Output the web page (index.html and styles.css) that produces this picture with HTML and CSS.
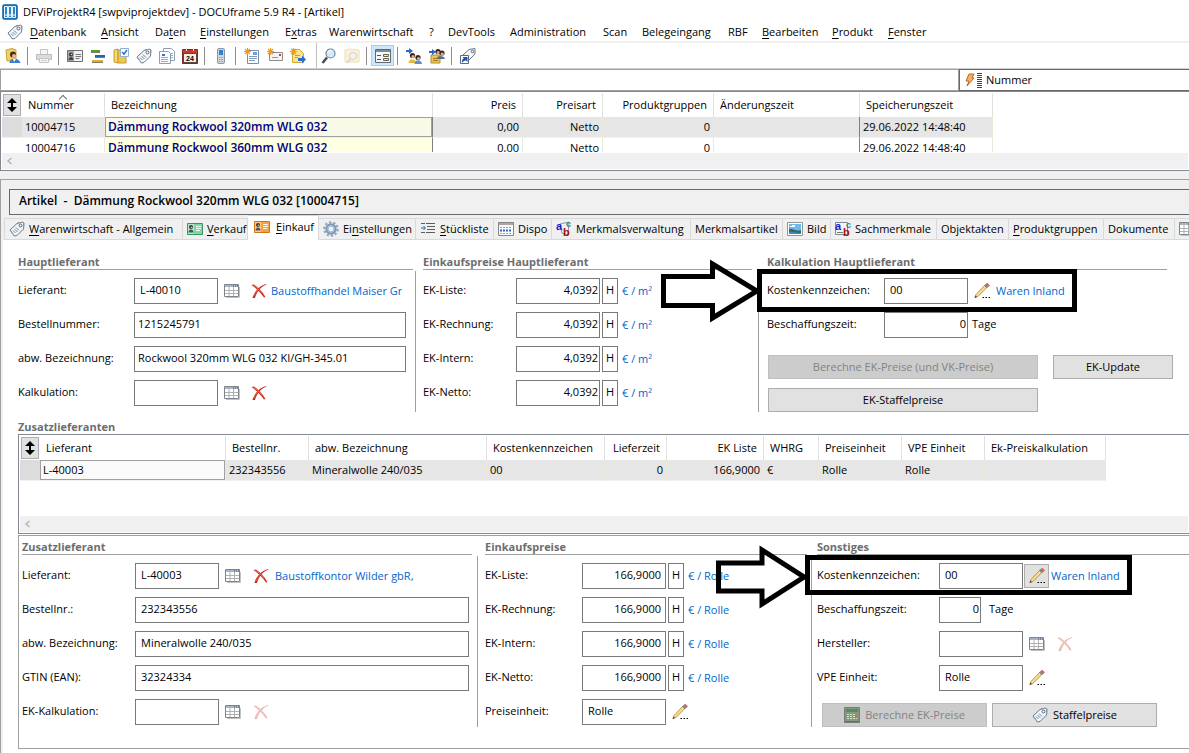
FILE: index.html
```html
<!DOCTYPE html>
<html lang="de">

<head>
  <meta charset="UTF-8">
  <meta name="viewport" content="width=device-width, initial-scale=1.0">
  <title>DFViProjektR4 [swpviprojektdev] - DOCUframe 5.9 R4 - [Artikel]</title>
  <link rel="stylesheet" href="styles.css">
</head>

<body>
  <!-- icon sprite -->
  <svg class="sprite" aria-hidden="true">
    <symbol id="i-app" viewBox="0 0 16 16">
      <rect x="0.5" y="0.5" width="15" height="15" rx="2" fill="#1c6fae" stroke="#3d87bd" />
      <path d="M2.500 2.500h3v11h-3zM6.500 2.500h3v11h-3zM10.500 2.500h3v11h-3z" fill="#2f86c5" stroke="#e8f4fc" />
      <path d="M4 10v2M8 10v2M12 10v2" stroke="#fff" />
    </symbol>
    <symbol id="i-tag" viewBox="0 0 16 16">
      <path d="M1 9 8 2.500l5.500-1.500 1.500 1.500L14.500 8 8 14.500 5.500 15z" fill="#f4f7fa" stroke="#66788a" />
      <path d="M1 9 5.500 15M9 1.500h5.500v5" fill="none" stroke="#8a99a8" />
      <path d="M4 9.500 6.500 12M5.500 8l3 3M7 6.500 10 9.500" stroke="#71869c" />
      <circle cx="11.500" cy="4.500" r="1.500" fill="#fff" stroke="#4f6478" />
    </symbol>
    <symbol id="i-login" viewBox="0 0 16 16">
      <path d="M1 2l6-1.500L11 2v10l-9 1z" fill="#f0d264" stroke="#c9a233" />
      <circle cx="8" cy="6.500" r="3" fill="#4a2a1c" />
      <circle cx="9" cy="8" r="2" fill="#e9b48c" />
      <path d="M4.500 15c0-5 9-6 11 0z" fill="#3c78d8" />
      <path d="M8 11l1 3 2-3z" fill="#fff" />
    </symbol>
    <symbol id="i-printer" viewBox="0 0 16 16">
      <path d="M4.500 1.500h7v5h-7z" fill="#f6f6f6" stroke="#c4c4c4" />
      <path d="M0.500 6.500h15v5h-15z" fill="#dcdcdc" stroke="#bdbdbd" />
      <path d="M3.500 10.500h9v4h-9z" fill="#f7f7f7" stroke="#c4c4c4" />
      <path d="M5 12.500h6" stroke="#cfcfcf" />
    </symbol>
    <symbol id="i-card" viewBox="0 0 16 16">
      <path d="M0.500 2.500h15v11h-15z" fill="#f1f1f1" stroke="#6e6e6e" />
      <path d="M1 3h6v10H1z" fill="#a9a9a9" />
      <circle cx="4" cy="6.500" r="2" fill="#333" />
      <circle cx="4.500" cy="6.500" r="0.800" fill="#ddd" />
      <path d="M1.500 12c0-4 5-4 5 0z" fill="#444" />
      <path d="M8.500 6.500H14M8.500 8.500H14M8.500 10.500h4" stroke="#777" />
    </symbol>
    <symbol id="i-card-green" viewBox="0 0 16 16">
      <path d="M0.500 2.500h15v11h-15z" fill="#86d3a6" stroke="#2f9c60" />
      <path d="M1 3h6v10H1z" fill="#b9e6cb" />
      <circle cx="4" cy="6" r="2" fill="#3a332c" />
      <circle cx="4.500" cy="6.300" r="0.900" fill="#d8b48c" />
      <path d="M1.500 11.500c0-4 5-4 5 0z" fill="#2f5d6a" />
      <path d="M9 5.500h5M9 7.500h5M9 9.500h4" stroke="#f4fff8" />
    </symbol>
    <symbol id="i-card-orange" viewBox="0 0 16 16">
      <path d="M0.500 2.500h15v11h-15z" fill="#f9a03f" stroke="#d27412" />
      <path d="M1 3h6v10H1z" fill="#ffc98a" />
      <circle cx="4" cy="6" r="2" fill="#3a332c" />
      <circle cx="4.500" cy="6.300" r="0.900" fill="#d8b48c" />
      <path d="M1.500 11.500c0-4 5-4 5 0z" fill="#4c5560" />
      <path d="M9 5.500h5M9 7.500h5M9 9.500h4" stroke="#fff6ea" />
    </symbol>
    <symbol id="i-gantt" viewBox="0 0 16 16">
      <path d="M1 2h9v2H1z" fill="#4fa51f" />
      <path d="M5 7h10v2H5z" fill="#1d67b8" />
      <path d="M2 12h11v2H2z" fill="#e7a63c" />
      <path d="M1 4.500h9M5 9.500h10M2 14.500h11" stroke="#7d7d60" />
    </symbol>
    <symbol id="i-folder-check" viewBox="0 0 16 16">
      <path d="M1 2l4-1v14l-4-1z" fill="#f5d873" stroke="#c79c2b" />
      <path d="M5 2h8v13H5z" fill="#eec553" stroke="#c79c2b" />
      <path d="M7.500 0.500h8v8h-8z" fill="#fff" stroke="#8fb3d6" />
      <path d="M9 4l2 2 3-4" fill="none" stroke="#2c73c9" stroke-width="1.500" />
    </symbol>
    <symbol id="i-docs" viewBox="0 0 16 16">
      <path d="M4.500 0.500h8l3 3v9h-11z" fill="#fff" stroke="#8c9fb8" />
      <path d="M0.500 3.500h9l2 2v10h-11z" fill="#fbfcff" stroke="#8c9fb8" />
      <path d="M2 9.500h7M2 11.500h7M2 13.500h7M12 5.500h2M12 7.500h2M12 9.500h2" stroke="#9aabc4" />
      <path d="M3 6h3v2H3z" fill="#4a6fd0" />
    </symbol>
    <symbol id="i-calendar" viewBox="0 0 16 16">
      <path d="M0.500 1.500h15v14h-15z" fill="#5a4a40" stroke="#7a2a22" />
      <path d="M1 2h14v3H1z" fill="#c93a2c" />
      <path d="M2 6h12v8H2z" fill="#f3efe8" />
      <path d="M4.500 0v3M11.500 0v3" stroke="#e8e8e8" />
      <text x="8" y="13" text-anchor="middle" class="glyph-day">24</text>
    </symbol>
    <symbol id="i-phone" viewBox="0 0 16 16">
      <rect x="4.500" y="0.500" width="7" height="15" rx="1.500" fill="#cfd5db" stroke="#8d979f" />
      <path d="M6 2h4v5H6z" fill="#2d82d6" />
      <path d="M6 9.500h4M6 11.500h4M6 13.500h4" stroke="#9aa4ac" stroke-dasharray="1 0.500" />
    </symbol>
    <symbol id="i-new-doc" viewBox="0 0 16 16">
      <path d="M3.500 2.500h11v13h-11z" fill="#fff" stroke="#7c8da3" />
      <path d="M9 4h4v3H9z" fill="#6f9ee0" />
      <path d="M5 8.500h8M5 10.500h8M5 12.500h6" stroke="#7d9cc0" />
      <path d="M3.500 0v7M0 3.500h7M1 1l5 5M6 1 1 6" stroke="#f09a1c" stroke-width="1.200" />
    </symbol>
    <symbol id="i-new-mail" viewBox="0 0 16 16">
      <path d="M2.500 4.500h13v8h-13z" fill="#f4f4f4" stroke="#8c8c8c" />
      <path d="M12 6h2v2h-2z" fill="#d23c2c" />
      <path d="M5 9.500h6" stroke="#999" />
      <path d="M3.500 0v7M0 3.500h7M1 1l5 5M6 1 1 6" stroke="#f09a1c" stroke-width="1.200" />
    </symbol>
    <symbol id="i-new-export" viewBox="0 0 16 16">
      <path d="M2.500 1.500h7l4 4v9h-11z" fill="#fbe48a" stroke="#d0a832" />
      <path d="M5 7.500h5M5 9.500h3" stroke="#c79f30" />
      <path d="M8 10h4V7.500l4 4-4 4V13H8z" fill="#2b68d8" />
      <path d="M3.500 0v7M0 3.500h7M1 1l5 5M6 1 1 6" stroke="#f09a1c" stroke-width="1.200" />
    </symbol>
    <symbol id="i-search" viewBox="0 0 16 16">
      <path d="M6 9.500 1.500 15" stroke="#4b4b50" stroke-width="2.500" />
      <circle cx="9.500" cy="5.500" r="4.500" fill="#d3e9f8" stroke="#6d8298" stroke-width="1.200" />
      <path d="M7 5c0-2 2-3 3.500-2.500" fill="none" stroke="#fff" stroke-width="1.300" />
    </symbol>
    <symbol id="i-search-folder" viewBox="0 0 16 16">
      <path d="M1 2l4-1 10 1v12H1z" fill="#faf1d6" stroke="#eddfb4" />
      <circle cx="9" cy="8" r="3.500" fill="#f3f3f3" stroke="#cfcfcf" />
      <path d="M6 11l-3 4" stroke="#d6d6d6" stroke-width="2" />
    </symbol>
    <symbol id="i-form" viewBox="0 0 16 16">
      <path d="M0.500 1.500h15v13h-15z" fill="#f7f7f5" stroke="#5d6a76" />
      <path d="M1 2h14v2H1z" fill="#7e8a96" />
      <path d="M2 7.500h4M2 11.500h4" stroke="#555" />
      <path d="M8.500 6.500h5v2h-5zM8.500 10.500h5v2h-5z" fill="#f3e7a8" stroke="#6a6250" />
    </symbol>
    <symbol id="i-people-in" viewBox="0 0 16 16">
      <path d="M0 2h3V0l4 3-4 3V4H0z" fill="#2b68c8" />
      <circle cx="6.500" cy="7.500" r="2.600" fill="#3d241a" />
      <circle cx="7" cy="8.500" r="1.600" fill="#e3ab82" />
      <path d="M2.500 15c0-5 7-5 8 0z" fill="#e9b93c" />
      <circle cx="12" cy="9.500" r="2.600" fill="#3d241a" />
      <circle cx="12.500" cy="10.500" r="1.600" fill="#e3ab82" />
      <path d="M8.500 16c0-5 7-5 7.500 0z" fill="#5a8fd0" />
    </symbol>
    <symbol id="i-people-folder" viewBox="0 0 16 16">
      <path d="M2 7h9v8H2z" fill="#ecc654" stroke="#b58c28" />
      <path d="M0 3h3V1l4 3-4 3V5H0z" fill="#2b68c8" />
      <circle cx="9" cy="3.500" r="2.600" fill="#3d241a" />
      <circle cx="9.300" cy="4.500" r="1.600" fill="#e3ab82" />
      <circle cx="13" cy="5" r="2.600" fill="#3d241a" />
      <circle cx="13.200" cy="6" r="1.600" fill="#e3ab82" />
      <path d="M7 11c1-4 8-4 9 0z" fill="#5b6f8c" />
      <path d="M4 10.500h5M4 12.500h5" stroke="#9a7720" />
    </symbol>
    <symbol id="i-tag-link" viewBox="0 0 16 16">
      <path d="M3 7 9 1.500l6-1V6L8 13z" fill="#f4f7fa" stroke="#66788a" />
      <circle cx="12.500" cy="3.500" r="1.200" fill="#fff" stroke="#4f6478" />
      <path d="M0.500 7.500h8v8h-8z" fill="#fff" stroke="#5a6b7c" />
      <path d="M2 15c0-4 1-4.500 2-4.500L2.500 9H7.500v5L6 12.500c-2 0-3 1-4 2.500z" fill="#1f55a8" />
    </symbol>
    <symbol id="i-flash" viewBox="0 0 20 16">
      <path d="M5 2h5L8 6h2l-7 8 2-5H2z" fill="#f9b064" stroke="#b56a2c" />
      <path d="M13 1.500h5M13 3.500h5M13 5.500h5M13 7.500h5M13 9.500h5M13 11.500h5M13 13.500h5M13 15.500h5" stroke="#444" />
    </symbol>
    <symbol id="i-updown" viewBox="0 0 10 14">
      <path d="M5 0l5 5H6v4h4l-5 5-5-5h4V5H0z" fill="#000" />
    </symbol>
    <symbol id="i-left" viewBox="0 0 8 8">
      <path d="M5.500 1 2 4l3.500 3" fill="none" stroke="#b5b5b5" stroke-width="1.500" />
    </symbol>
    <symbol id="i-gear" viewBox="0 0 16 16">
      <circle cx="8" cy="8" r="6.700" fill="none" stroke="#8fa9c6" stroke-width="2.200" stroke-dasharray="2.300 1.900" />
      <circle cx="8" cy="8" r="4.700" fill="#b4c9e0" stroke="#7d98b6" stroke-width="2" />
      <circle cx="8" cy="8" r="3" fill="#f0f0f0" stroke="#9db3cc" />
    </symbol>
    <symbol id="i-list" viewBox="0 0 16 16">
      <path d="M1 2.500h4M6 2.500h9M7 5.500h8M7 8.500h8M1 11.500h4M6 11.500h9" stroke="#5c5c5c" />
      <path d="M1 7h4M3.500 5l2 2-2 2" fill="none" stroke="#2466c4" />
    </symbol>
    <symbol id="i-dispo" viewBox="0 0 16 16">
      <path d="M0.500 1.500h15v13h-15z" fill="#fafafa" stroke="#868686" />
      <path d="M1 2h14v2H1z" fill="#a8a8a8" />
      <path d="M2 6.500h12M2 12.500h12" stroke="#9aa2ac" stroke-dasharray="2 1" />
      <path d="M2 9.500h12" stroke="#2f68c0" stroke-width="2" stroke-dasharray="2 1" />
    </symbol>
    <symbol id="i-abc" viewBox="0 0 16 16">
      <path d="M4 3l9-2-1 13-6-2z" fill="#eef2f6" stroke="#8b98a6" />
      <text x="0" y="9" class="glyph-a">a</text>
      <text x="7" y="15" class="glyph-b">b</text>
      <text x="10" y="6" class="glyph-c">c</text>
    </symbol>
    <symbol id="i-abc-form" viewBox="0 0 16 16">
      <path d="M0.500 1.500h12v12h-12z" fill="#f2f4f6" stroke="#7f8a96" />
      <path d="M2 11.500h6" stroke="#777" />
      <text x="0" y="9" class="glyph-a">a</text>
      <text x="8" y="15" class="glyph-b">b</text>
      <text x="11" y="7" class="glyph-c">c</text>
    </symbol>
    <symbol id="i-image" viewBox="0 0 16 16">
      <path d="M0.500 1.500h15v13h-15z" fill="#fff" stroke="#8f979e" />
      <path d="M2 3h12v7H2z" fill="#6fb7ec" />
      <path d="M3 5h5v1H3zM5 4h3v1H5z" fill="#fff" />
      <path d="M2 8c4-1 6 3 12 1v4H2z" fill="#2e6d5f" />
      <path d="M2 11c4-1 8 1 12 1v1H2z" fill="#3f86c9" />
    </symbol>
    <symbol id="i-grid" viewBox="0 0 16 16">
      <path d="M2 14.500h13.500V4" fill="none" stroke="#c2c2c2" />
      <path d="M0.500 1.500h14v12h-14z" fill="#fff" stroke="#7d858c" />
      <path d="M1 2h13v2H1z" fill="#a9b4c2" />
      <path d="M9 3h1M11 3h1M13 3h1" stroke="#3e5a86" />
      <path d="M1 7.500h13M1 10.500h13M5 4v9M9.500 4v9" stroke="#b1b1b1" />
    </symbol>
    <symbol id="i-cross" viewBox="0 0 16 16">
      <path d="M0.500 2 3 1.500C7 4 11 8 14.500 14L13 14.500C10 10 6 6 0.500 2z" fill="#d4301c" />
      <path d="M15.500 1.500C10 3.500 5.500 9 4 15L1.500 15C3 8.500 8.500 3 15 1z" fill="#c8240f" />
      <path d="M2.500 2.300C6 4.500 9 7.500 11 10M2.800 13.500C4 10 6 7.500 8 5.500" fill="none" stroke="#f0806c" stroke-width="0.700" />
    </symbol>
    <symbol id="i-pencil" viewBox="0 0 16 16">
      <path d="M1 14.500 2 11.500l8.500-9 2.200 2.200L4 13.500z" fill="#f9dc8c" stroke="#a5823f" stroke-width="0.800" />
      <path d="M0.500 15 1.500 12.500 3 14z" fill="#444" />
      <path d="M10.500 2.500l1-1 2.300 2.300-1 1z" fill="#6ba888" stroke="#4a7a62" stroke-width="0.700" />
      <path d="M12 1.200l1-1 2.500 2-1.200 1.400z" fill="#e0606e" stroke="#c24a58" stroke-width="0.700" />
      <path d="M8.500 14.500H10M11.500 14.500H13M14.500 14.500H16" stroke="#000" />
    </symbol>
    <symbol id="i-calc" viewBox="0 0 16 16">
      <path d="M0.500 0.500h15v15h-15z" fill="#7e9c7e" stroke="#7a7a7a" />
      <path d="M2 2h12v3H2z" fill="#5f8468" />
      <path d="M3 7.500h10M3 9.500h10M3 11.500h10" stroke="#cfe6c8" stroke-dasharray="2 1" />
      <path d="M11 7.500h2M11 9.500h2" stroke="#c56a52" />
      <path d="M1 14.500h14" stroke="#6a6a6a" />
    </symbol>
  </svg>

  <header class="titlebar">
    <svg class="icon"><use href="#i-app" /></svg>
    <h1>DFViProjektR4 [swpviprojektdev] - DOCUframe 5.9 R4 - [Artikel]</h1>
  </header>

  <nav class="menubar">
    <svg class="icon"><use href="#i-tag" /></svg>
    <a href="#"><u>D</u>atenbank</a>
    <a href="#"><u>A</u>nsicht</a>
    <a href="#">Da<u>t</u>en</a>
    <a href="#"><u>E</u>instellungen</a>
    <a href="#">E<u>x</u>tras</a>
    <a href="#">Warenwirtschaft</a>
    <a href="#">?</a>
    <a href="#">DevTools</a>
    <a href="#">Administration</a>
    <a href="#">Scan</a>
    <a href="#">Belegeingang</a>
    <a href="#">RBF</a>
    <a href="#"><u>B</u>earbeiten</a>
    <a href="#"><u>P</u>rodukt</a>
    <a href="#"><u>F</u>enster</a>
  </nav>

  <div class="toolbar">
    <div class="tool-group">
      <button aria-label="Anmelden"><svg class="icon"><use href="#i-login" /></svg></button>
      <span class="tool-sep"></span>
      <button aria-label="Drucken" disabled><svg class="icon"><use href="#i-printer" /></svg></button>
      <span class="tool-sep"></span>
      <button aria-label="Adressen"><svg class="icon"><use href="#i-card" /></svg></button>
      <button aria-label="Projekte"><svg class="icon"><use href="#i-gantt" /></svg></button>
      <button aria-label="Aufgaben"><svg class="icon"><use href="#i-folder-check" /></svg></button>
      <button aria-label="Artikel"><svg class="icon"><use href="#i-tag" /></svg></button>
      <button aria-label="Belege"><svg class="icon"><use href="#i-docs" /></svg></button>
      <button aria-label="Kalender"><svg class="icon"><use href="#i-calendar" /></svg></button>
      <span class="tool-sep"></span>
      <button aria-label="Telefon"><svg class="icon"><use href="#i-phone" /></svg></button>
      <span class="tool-sep"></span>
      <button aria-label="Neues Dokument"><svg class="icon"><use href="#i-new-doc" /></svg></button>
      <button aria-label="Neue E-Mail"><svg class="icon"><use href="#i-new-mail" /></svg></button>
      <button aria-label="Neuer Export"><svg class="icon"><use href="#i-new-export" /></svg></button>
    </div>
    <div class="tool-group">
      <button aria-label="Suchen"><svg class="icon"><use href="#i-search" /></svg></button>
      <button aria-label="Akte suchen" disabled><svg class="icon"><use href="#i-search-folder" /></svg></button>
      <span class="tool-sep"></span>
      <button class="pressed" aria-label="Maske"><svg class="icon"><use href="#i-form" /></svg></button>
      <span class="tool-sep"></span>
      <button aria-label="Zuweisen"><svg class="icon"><use href="#i-people-in" /></svg></button>
      <button aria-label="Gruppe zuweisen"><svg class="icon"><use href="#i-people-folder" /></svg></button>
      <span class="tool-sep"></span>
      <button aria-label="Verknüpfung"><svg class="icon"><use href="#i-tag-link" /></svg></button>
    </div>
  </div>

  <div class="searchbar">
    <input type="text" aria-label="Suche">
    <button class="search-field"><svg class="icon-wide"><use href="#i-flash" /></svg>Nummer</button>
  </div>

  <div class="list article-list">
    <div class="list-view">
      <table>
        <colgroup>
          <col class="c-handle"><col class="c-nummer"><col class="c-bez"><col class="c-preis"><col class="c-art"><col class="c-gruppen"><col class="c-aend"><col class="c-speich">
        </colgroup>
        <thead>
          <tr>
            <th class="handle"><button aria-label="Sortieren"><svg><use href="#i-updown" /></svg></button></th>
            <th class="sorted">Nummer</th>
            <th>Bezeichnung</th>
            <th class="num">Preis</th>
            <th class="num">Preisart</th>
            <th class="num">Produktgruppen</th>
            <th>Änderungszeit</th>
            <th>Speicherungszeit</th>
          </tr>
        </thead>
        <tbody>
          <tr class="selected">
            <td class="handle"></td>
            <td>10004715</td>
            <td class="name current">Dämmung Rockwool 320mm WLG 032</td>
            <td class="num">0,00</td>
            <td class="num">Netto</td>
            <td class="num">0</td>
            <td class="frozen"></td>
            <td>29.06.2022 14:48:40</td>
          </tr>
          <tr>
            <td class="handle"></td>
            <td>10004716</td>
            <td class="name">Dämmung Rockwool 360mm WLG 032</td>
            <td class="num">0,00</td>
            <td class="num">Netto</td>
            <td class="num">0</td>
            <td class="frozen"></td>
            <td>29.06.2022 14:48:40</td>
          </tr>
        </tbody>
      </table>
    </div>
    <div class="hscroll"><svg><use href="#i-left" /></svg></div>
  </div>

  <main class="detail">
    <h2 class="record-title">Artikel&nbsp; -&nbsp; Dämmung Rockwool 320mm WLG 032 [10004715]</h2>

    <div class="tabs" role="tablist">
      <button role="tab"><svg class="icon"><use href="#i-tag" /></svg><span><u>W</u>arenwirtschaft - Allgemein</span></button>
      <button role="tab"><svg class="icon"><use href="#i-card-green" /></svg><span><u>V</u>erkauf</span></button>
      <button role="tab" class="active" aria-selected="true"><svg class="icon"><use href="#i-card-orange" /></svg><span><u>E</u>inkauf</span></button>
      <button role="tab"><svg class="icon"><use href="#i-gear" /></svg><span>Ei<u>n</u>stellungen</span></button>
      <button role="tab"><svg class="icon"><use href="#i-list" /></svg><span><u>S</u>tückliste</span></button>
      <button role="tab"><svg class="icon"><use href="#i-dispo" /></svg><span>Dispo</span></button>
      <button role="tab"><svg class="icon"><use href="#i-abc" /></svg><span>Merkmalsverwaltung</span></button>
      <button role="tab"><span>Merkmalsartikel</span></button>
      <button role="tab"><svg class="icon"><use href="#i-image" /></svg><span>Bild</span></button>
      <button role="tab"><svg class="icon"><use href="#i-abc-form" /></svg><span>Sachmerkmale</span></button>
      <button role="tab"><span>Objektakten</span></button>
      <button role="tab"><span><u>P</u>roduktgruppen</span></button>
      <button role="tab"><span>Dokumente</span></button>
      <button role="tab" aria-label="Tabelle"><svg class="icon"><use href="#i-grid" /></svg></button>
    </div>

    <div class="page">
      <div class="sections main-supplier">
        <section class="col-supplier">
          <h3>Hauptlieferant</h3>
          <div class="row">
            <label for="hl-lieferant">Lieferant:</label>
            <input id="hl-lieferant" class="short" type="text" value="L-40010">
            <button class="icon-btn" aria-label="Auswählen"><svg class="icon"><use href="#i-grid" /></svg></button>
            <button class="icon-btn" aria-label="Entfernen"><svg class="icon"><use href="#i-cross" /></svg></button>
            <a href="#">Baustoffhandel Maiser Gr</a>
          </div>
          <div class="row">
            <label for="hl-bestell">Bestellnummer:</label>
            <input id="hl-bestell" type="text" value="1215245791">
          </div>
          <div class="row">
            <label for="hl-bez">abw. Bezeichnung:</label>
            <input id="hl-bez" type="text" value="Rockwool 320mm WLG 032 KI/GH-345.01">
          </div>
          <div class="row">
            <label for="hl-kalk">Kalkulation:</label>
            <input id="hl-kalk" class="short" type="text">
            <button class="icon-btn" aria-label="Auswählen"><svg class="icon"><use href="#i-grid" /></svg></button>
            <button class="icon-btn" aria-label="Entfernen"><svg class="icon"><use href="#i-cross" /></svg></button>
          </div>
        </section>

        <section class="col-prices">
          <h3>Einkaufspreise Hauptlieferant</h3>
          <div class="row">
            <label for="hp-liste">EK-Liste:</label>
            <input id="hp-liste" class="short num" type="text" value="4,0392">
            <button class="hist">H</button>
            <a href="#">€ / m²</a>
          </div>
          <div class="row">
            <label for="hp-rechnung">EK-Rechnung:</label>
            <input id="hp-rechnung" class="short num" type="text" value="4,0392">
            <button class="hist">H</button>
            <a href="#">€ / m²</a>
          </div>
          <div class="row">
            <label for="hp-intern">EK-Intern:</label>
            <input id="hp-intern" class="short num" type="text" value="4,0392">
            <button class="hist">H</button>
            <a href="#">€ / m²</a>
          </div>
          <div class="row">
            <label for="hp-netto">EK-Netto:</label>
            <input id="hp-netto" class="short num" type="text" value="4,0392">
            <button class="hist">H</button>
            <a href="#">€ / m²</a>
          </div>
        </section>

        <section class="col-calc">
          <h3>Kalkulation Hauptlieferant</h3>
          <div class="row">
            <label for="hk-kosten">Kostenkennzeichen:</label>
            <input id="hk-kosten" class="short" type="text" value="00">
            <button class="icon-btn" aria-label="Bearbeiten"><svg class="icon"><use href="#i-pencil" /></svg></button>
            <a href="#">Waren Inland</a>
            <div class="marker">
              <svg viewBox="0 0 100 64"><path d="M5.500 17.500H54.500V5L99 32 54.500 59V46.500H5.500z" /></svg>
            </div>
          </div>
          <div class="row">
            <label for="hk-zeit">Beschaffungszeit:</label>
            <input id="hk-zeit" class="short num" type="text" value="0">
            <span class="unit">Tage</span>
          </div>
          <div class="actions">
            <button class="btn wide" disabled>Berechne EK-Preise (und VK-Preise)</button>
            <button class="btn">EK-Update</button>
            <button class="btn wide">EK-Staffelpreise</button>
          </div>
        </section>
      </div>

      <h3 class="list-title">Zusatzlieferanten</h3>
      <div class="list supplier-list">
        <div class="list-view">
          <table>
            <colgroup>
              <col class="c-handle"><col class="c-lief"><col class="c-best"><col class="c-abw"><col class="c-kosten"><col class="c-zeit"><col class="c-ek"><col class="c-whrg"><col class="c-einheit"><col class="c-einheit"><col class="c-kalk">
            </colgroup>
            <thead>
              <tr>
                <th class="handle"><button aria-label="Sortieren"><svg><use href="#i-updown" /></svg></button></th>
                <th>Lieferant</th>
                <th>Bestellnr.</th>
                <th>abw. Bezeichnung</th>
                <th>Kostenkennzeichen</th>
                <th class="num">Lieferzeit</th>
                <th class="num">EK Liste</th>
                <th>WHRG</th>
                <th>Preiseinheit</th>
                <th>VPE Einheit</th>
                <th>Ek-Preiskalkulation</th>
              </tr>
            </thead>
            <tbody>
              <tr class="selected">
                <td class="handle"></td>
                <td class="current">L-40003</td>
                <td>232343556</td>
                <td>Mineralwolle 240/035</td>
                <td>00</td>
                <td class="num">0</td>
                <td class="num">166,9000</td>
                <td>€</td>
                <td>Rolle</td>
                <td>Rolle</td>
                <td></td>
              </tr>
            </tbody>
          </table>
        </div>
        <div class="hscroll"><svg><use href="#i-left" /></svg></div>
      </div>

      <div class="sections extra-supplier">
        <section class="col-supplier">
          <h3>Zusatzlieferant</h3>
          <div class="row">
            <label for="zl-lieferant">Lieferant:</label>
            <input id="zl-lieferant" class="short" type="text" value="L-40003">
            <button class="icon-btn" aria-label="Auswählen"><svg class="icon"><use href="#i-grid" /></svg></button>
            <button class="icon-btn" aria-label="Entfernen"><svg class="icon"><use href="#i-cross" /></svg></button>
            <a href="#">Baustoffkontor Wilder gbR,</a>
          </div>
          <div class="row">
            <label for="zl-bestell">Bestellnr.:</label>
            <input id="zl-bestell" type="text" value="232343556">
          </div>
          <div class="row">
            <label for="zl-bez">abw. Bezeichnung:</label>
            <input id="zl-bez" type="text" value="Mineralwolle 240/035">
          </div>
          <div class="row">
            <label for="zl-gtin">GTIN (EAN):</label>
            <input id="zl-gtin" type="text" value="32324334">
          </div>
          <div class="row">
            <label for="zl-kalk">EK-Kalkulation:</label>
            <input id="zl-kalk" class="short" type="text">
            <button class="icon-btn" aria-label="Auswählen"><svg class="icon"><use href="#i-grid" /></svg></button>
            <button class="icon-btn" aria-label="Entfernen" disabled><svg class="icon"><use href="#i-cross" /></svg></button>
          </div>
        </section>

        <section class="col-prices">
          <h3>Einkaufspreise</h3>
          <div class="row">
            <label for="zp-liste">EK-Liste:</label>
            <input id="zp-liste" class="short num" type="text" value="166,9000">
            <button class="hist">H</button>
            <a href="#">€ / Rolle</a>
          </div>
          <div class="row">
            <label for="zp-rechnung">EK-Rechnung:</label>
            <input id="zp-rechnung" class="short num" type="text" value="166,9000">
            <button class="hist">H</button>
            <a href="#">€ / Rolle</a>
          </div>
          <div class="row">
            <label for="zp-intern">EK-Intern:</label>
            <input id="zp-intern" class="short num" type="text" value="166,9000">
            <button class="hist">H</button>
            <a href="#">€ / Rolle</a>
          </div>
          <div class="row">
            <label for="zp-netto">EK-Netto:</label>
            <input id="zp-netto" class="short num" type="text" value="166,9000">
            <button class="hist">H</button>
            <a href="#">€ / Rolle</a>
          </div>
          <div class="row">
            <label for="zp-einheit">Preiseinheit:</label>
            <input id="zp-einheit" class="short" type="text" value="Rolle">
            <button class="icon-btn" aria-label="Bearbeiten"><svg class="icon"><use href="#i-pencil" /></svg></button>
          </div>
        </section>

        <section class="col-calc">
          <h3>Sonstiges</h3>
          <div class="row">
            <label for="zs-kosten">Kostenkennzeichen:</label>
            <input id="zs-kosten" class="short" type="text" value="00">
            <button class="icon-btn raised" aria-label="Bearbeiten"><svg class="icon"><use href="#i-pencil" /></svg></button>
            <a href="#">Waren Inland</a>
            <div class="marker">
              <svg viewBox="0 0 92 64"><path d="M4.500 18H48V5L90 32 48 59V46H4.500z" /></svg>
            </div>
          </div>
          <div class="row">
            <label for="zs-zeit">Beschaffungszeit:</label>
            <input id="zs-zeit" class="tiny num" type="text" value="0">
            <span class="unit">Tage</span>
          </div>
          <div class="row">
            <label for="zs-hersteller">Hersteller:</label>
            <input id="zs-hersteller" class="short" type="text">
            <button class="icon-btn" aria-label="Auswählen"><svg class="icon"><use href="#i-grid" /></svg></button>
            <button class="icon-btn" aria-label="Entfernen" disabled><svg class="icon"><use href="#i-cross" /></svg></button>
          </div>
          <div class="row">
            <label for="zs-vpe">VPE Einheit:</label>
            <input id="zs-vpe" class="short" type="text" value="Rolle">
            <button class="icon-btn" aria-label="Bearbeiten"><svg class="icon"><use href="#i-pencil" /></svg></button>
          </div>
          <div class="actions">
            <button class="btn" disabled><svg class="icon"><use href="#i-calc" /></svg>Berechne EK-Preise</button>
            <button class="btn"><svg class="icon"><use href="#i-tag" /></svg>Staffelpreise</button>
          </div>
        </section>
      </div>
    </div>
  </main>
</body>

</html>
```
FILE: styles.css
```css
:root {
  --face: #f0f0f0;
  --line: #a0a0a0;
  --frame: #828790;
  --edit: #7a7a7a;
  --link: #0066cc;
  --heading: #6d6d6d;
}

* {
  box-sizing: border-box;
}

body {
  margin: 0;
  min-height: 100vh;
  display: flex;
  flex-direction: column;
  overflow: hidden;
  background-color: #fff;
  color: #000;
  font-family: "Open Sans", "Noto Sans", sans-serif;
  font-size: 11px;
  line-height: 16px;
}

button,
input {
  font: inherit;
  color: inherit;
  margin: 0;
  padding: 0;
  border: none;
  border-radius: 0;
  background: none;
}

a {
  color: inherit;
  text-decoration: none;
}

u {
  text-underline-offset: 2px;
}

h1,
h2,
h3 {
  margin: 0;
  font-size: inherit;
}

.sprite {
  display: none;
}

.icon {
  width: 16px;
  height: 16px;
  flex: none;
  display: block;
}

.glyph-day {
  font: bold 7px "Liberation Sans", sans-serif;
}

.glyph-a,
.glyph-b,
.glyph-c {
  font: bold 11px "Liberation Sans", sans-serif;
  fill: #1020d0;
}

.glyph-b {
  fill: #a01010;
}

.glyph-c {
  font-size: 9px;
  fill: #2a8a86;
}

/* title, menu, toolbar */

.titlebar {
  display: flex;
  align-items: center;
  gap: 5px;
  height: 23px;
  padding-left: 2px;
}

.titlebar h1 {
  font-weight: normal;
}

.menubar {
  display: grid;
  grid-template-columns: 23px 71px 54px 45px 85px 44px 100px 19px 62px 93px 39px 86px 34px 70px 56px 60px;
  align-items: center;
  height: 20px;
  padding-left: 7px;
  border-bottom: 2px solid var(--face);
}

.toolbar {
  display: flex;
  height: 26px;
  border-bottom: 1px solid #d0d0d0;
}

.tool-group {
  display: flex;
  align-items: center;
  padding: 0 7px 0 1px;
}

.tool-group + .tool-group {
  padding-left: 0;
  border-left: 1px solid #c0c0c0;
}

.tool-group button {
  width: 23px;
  height: 21px;
  display: flex;
  align-items: center;
  justify-content: center;
}

.tool-group .pressed {
  background-color: #cce8ff;
  border: 1px solid #99d1ff;
}

.tool-sep {
  width: 1px;
  height: 18px;
  margin: 0 4px 0 3px;
  background-color: #8c8c8c;
}

.searchbar {
  display: flex;
  height: 22px;
}

.searchbar input {
  flex: 1;
  border: 1px solid var(--line);
}

.search-field {
  display: flex;
  align-items: center;
  gap: 2px;
  width: 230px;
  padding-left: 4px;
  border: 1px solid #696969;
  border-right: none;
}

.icon-wide {
  width: 20px;
  height: 16px;
}

/* lists */

.list {
  padding: 1px;
  border: 1px solid var(--frame);
  border-right: none;
  background-color: #fff;
}

.list-view {
  overflow: hidden;
}

.article-list .list-view {
  height: 60px;
  border-bottom: 1px solid #fff;
}

.supplier-list .list-view {
  height: 80px;
}

.hscroll {
  display: flex;
  align-items: center;
  height: 16px;
  padding-left: 4px;
  background-color: var(--face);
}

.hscroll svg {
  width: 8px;
  height: 8px;
}

table {
  width: 0;
  border-collapse: separate;
  border-spacing: 0;
  table-layout: fixed;
}

th,
td {
  height: 21px;
  padding: 0 3px;
  text-align: left;
  white-space: nowrap;
  overflow: hidden;
  border-right: 1px solid #ece9d8;
}

th {
  height: 24px;
  padding: 0 6px;
  font-weight: normal;
  border-right-color: #e0e0e0;
}

td {
  border-bottom: 1px solid #f0f0f0;
}

.num {
  text-align: right;
}

.handle,
th.handle {
  padding: 0 1px;
  border-right: none;
}

.handle button {
  display: flex;
  align-items: center;
  justify-content: center;
  width: 18px;
  height: 22px;
  border: 1px solid #adadad;
  background-color: #e1e1e1;
}

.handle svg {
  width: 10px;
  height: 14px;
}

.sorted {
  position: relative;
}

.sorted::after {
  content: "";
  position: absolute;
  top: 3px;
  left: 38px;
  width: 5px;
  height: 5px;
  border: solid #707070;
  border-width: 1px 0 0 1px;
  transform: rotate(45deg);
}

.selected td {
  background-color: #e6e6e6;
}

.selected .handle {
  background-color: #dcdcdc;
}

td.name {
  background-color: #ffffe1;
  color: #000080;
  font-size: 12px;
  font-weight: 600;
  border-right-color: #808080;
}

td.frozen {
  border-right-color: #808080;
}

.selected .current {
  background-color: #fafafa;
  box-shadow: inset 0 0 0 1px var(--line);
}

.selected .name.current {
  background-color: #f9f9e8;
}

.c-handle { width: 20px; }
.c-nummer { width: 83px; }
.c-bez { width: 328px; }
.c-preis { width: 90px; }
.c-art { width: 80px; }
.c-gruppen { width: 111px; }
.c-aend { width: 146px; }
.c-speich { width: 133px; }

.c-lief { width: 186px; }
.c-best { width: 83px; }
.c-abw { width: 178px; }
.c-kosten { width: 118px; }
.c-zeit { width: 62px; }
.c-ek { width: 97px; }
.c-whrg { width: 55px; }
.c-einheit { width: 83px; }
.c-kalk { width: 121px; }

/* record area */

.detail {
  flex: 1;
  display: flex;
  flex-direction: column;
  margin-top: 8px;
  padding-top: 9px;
  border-top: 1px solid var(--line);
  border-left: 1px solid var(--line);
  background-color: var(--face);
  box-shadow: 0 -8px 0 var(--face);
}

.record-title {
  height: 26px;
  margin-left: 8px;
  padding-left: 9px;
  font-size: 12px;
  font-weight: 600;
  line-height: 22px;
  border: 1px solid #696969;
  border-right: none;
}

.tabs {
  display: grid;
  grid-template-columns: 179px 65px 71px 97px 78px 58px 139px 92px 48px 106px 72px 95px 71px 30px;
  align-items: end;
  height: 25px;
  margin-left: 3px;
}

.tabs button {
  display: flex;
  align-items: center;
  gap: 4px;
  height: 22px;
  padding-left: 4px;
  white-space: nowrap;
  border-top: 1px solid #d9d9d9;
  border-right: 1px solid #d9d9d9;
  border-bottom: 1px solid #d9d9d9;
}

.tabs button:first-child {
  border-left: 1px solid #d9d9d9;
}

.tabs .active {
  height: 25px;
  padding-left: 6px;
  padding-bottom: 3px;
  gap: 6px;
  background-color: #fff;
  border-bottom: none;
}

.page {
  flex: 1;
  margin-left: 2px;
  padding: 14px 0 2px 15px;
  background-color: #fff;
}

h3 {
  height: 16px;
  color: var(--heading);
  border-bottom: 1px solid var(--line);
}

.sections {
  display: grid;
}

.main-supplier {
  grid-template-columns: 398px 343px 1fr;
}

.extra-supplier {
  grid-template-columns: 459px 334px 1fr;
  margin-top: 1px;
  padding: 3px 0 21px;
  border: 1px solid var(--line);
  border-right: none;
}

/* the rules between columns start below the headings */
.sections section {
  border-right: 1px solid;
  border-image: linear-gradient(to bottom, transparent 18px, var(--line) 18px) 1;
}

.sections .col-calc {
  border: none;
}

.main-supplier .col-supplier {
  padding-right: 2px;
}

.main-supplier .col-prices {
  padding: 0 6px 0 7px;
}

.main-supplier .col-calc {
  padding-left: 8px;
}

.main-supplier .col-calc h3 {
  max-width: 400px;
}

.extra-supplier .col-supplier {
  padding: 0 5px 0 3px;
}

.extra-supplier .col-prices {
  padding: 0 4px 0 7px;
}

.extra-supplier .col-calc {
  padding-left: 5px;
}

.row {
  position: relative;
  display: flex;
  align-items: center;
  height: 26px;
  margin-bottom: 8px;
}

h3 + .row {
  margin-top: 8px;
}

.row:last-child {
  margin-bottom: 0;
}

.row label {
  flex: none;
  width: 116px;
  padding-bottom: 2px;
}

.row input {
  flex: 1;
  height: 26px;
  padding: 0 3px 3px;
  border: 1px solid var(--edit);
  background-color: #fff;
}

.row .short {
  flex: none;
  width: 84px;
  padding-left: 5px;
}

.row .tiny {
  flex: none;
  width: 42px;
}

.row input.num {
  padding-right: 1px;
}

.row a {
  color: var(--link);
  white-space: nowrap;
  overflow: hidden;
}

.col-supplier .row {
  padding-right: 7px;
}

.extra-supplier .col-supplier .row {
  padding-right: 3px;
}

.extra-supplier .col-supplier label {
  width: 113px;
}

.col-prices .row label {
  width: 93px;
}

.extra-supplier .col-prices label {
  width: 97px;
}

.main-supplier .col-calc label {
  width: 117px;
}

.extra-supplier .col-calc label {
  width: 122px;
}

.extra-supplier .row input {
  padding-left: 5px;
}

.extra-supplier .row .short.num {
  padding-right: 4px;
}

.icon-btn {
  flex: none;
  width: 28px;
  height: 24px;
  display: flex;
  align-items: center;
  justify-content: center;
}

.main-supplier .icon-btn + .icon-btn {
  width: 25px;
}

.icon-btn:disabled {
  opacity: 0.35;
}

.icon-btn.raised {
  width: 25px;
  margin: 0 2px 0 1px;
  border: 1px solid #adadad;
  background-color: #e1e1e1;
}

.hist {
  width: 16px;
  height: 26px;
  margin: 0 4px 0 2px;
  padding-bottom: 2px;
  border: 1px solid var(--edit);
}

.unit {
  margin-left: 4px;
  padding-bottom: 2px;
}

.tiny + .unit {
  margin-left: 8px;
}

.actions {
  display: grid;
  gap: 9px 15px;
  margin-left: 1px;
}

.main-supplier .actions {
  grid-template-columns: 270px 120px;
  margin-top: 17px;
}

.extra-supplier .actions {
  grid-template-columns: 165px 165px;
  column-gap: 5px;
  margin: 12px 0 0 5px;
}

.btn {
  display: flex;
  align-items: center;
  justify-content: center;
  gap: 5px;
  height: 24px;
  border: 1px solid #adadad;
  background-color: #e1e1e1;
}

.btn:disabled {
  color: #838383;
  border-color: #bfbfbf;
  background-color: #cccccc;
}

.list-title {
  height: 14px;
  margin-top: 8px;
  line-height: 14px;
  border: none;
}

/* annotation frame with its arrow */
.marker {
  position: absolute;
  top: -9px;
  left: -10px;
  width: 320px;
  height: 43px;
  border: 5px solid #000;
  pointer-events: none;
}

.marker svg {
  position: absolute;
  top: -15px;
  right: calc(100% + 4px);
  width: 100px;
  height: 64px;
  fill: none;
  stroke: #000;
  stroke-width: 5px;
}

.extra-supplier .marker {
  top: -8px;
  left: -12px;
  width: 327px;
  height: 40px;
}

.extra-supplier .marker svg {
  width: 92px;
}
```
